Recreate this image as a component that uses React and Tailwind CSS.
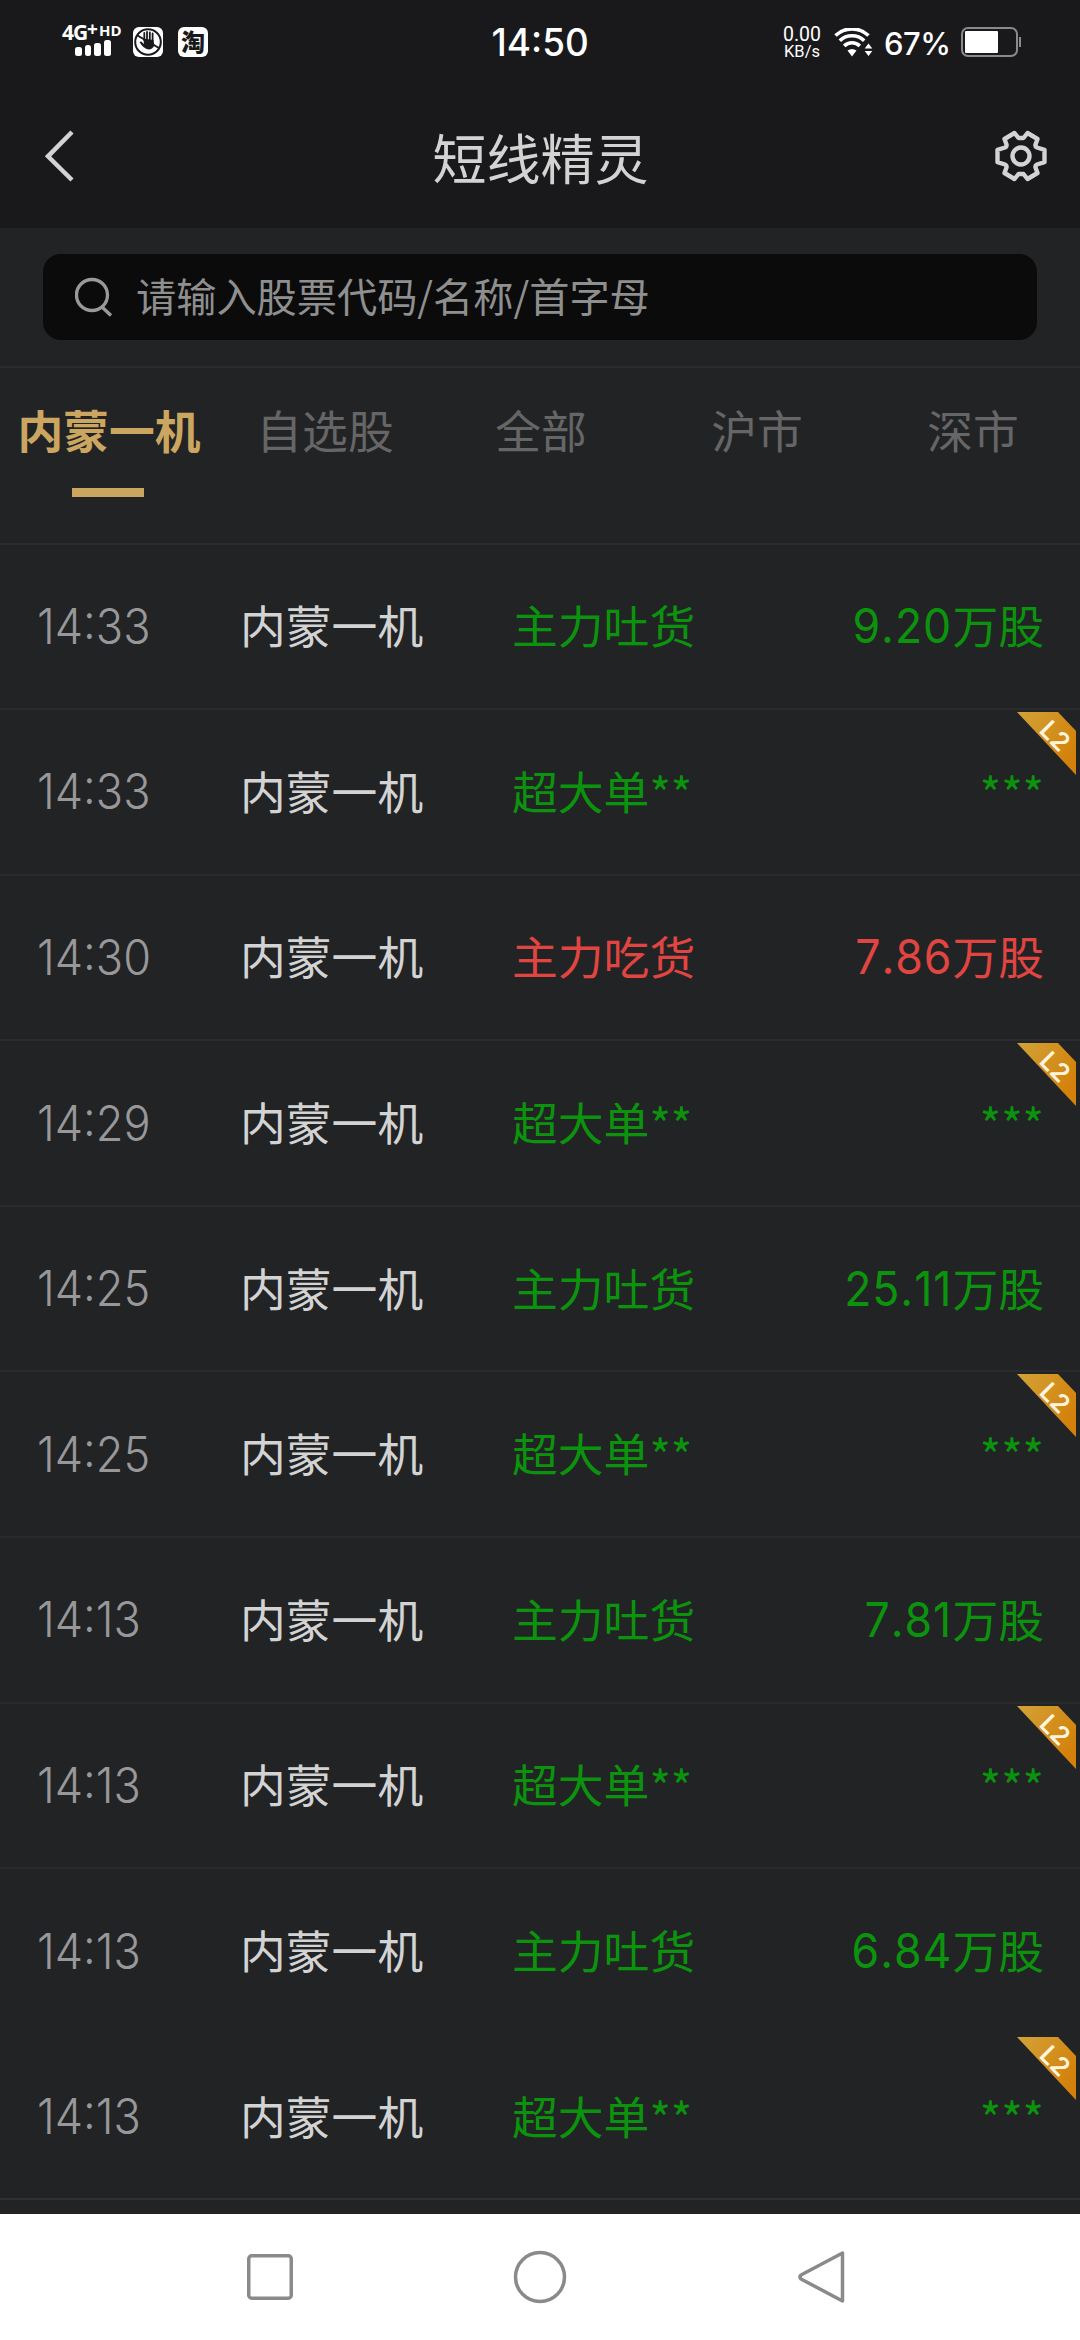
const NOTO = "font-['Noto_Sans_CJK_SC',sans-serif]";

const rows = [
  { time: "14:33", kind: "主力吐货", value: "9.20", color: "text-[#0c930d]" },
  { time: "14:33", kind: "超大单", color: "text-[#0c930d]", l2: true },
  { time: "14:30", kind: "主力吃货", value: "7.86", color: "text-[#e04541]" },
  { time: "14:29", kind: "超大单", color: "text-[#0c930d]", l2: true },
  { time: "14:25", kind: "主力吐货", value: "25.11", color: "text-[#0c930d]" },
  { time: "14:25", kind: "超大单", color: "text-[#0c930d]", l2: true },
  { time: "14:13", kind: "主力吐货", value: "7.81", color: "text-[#0c930d]" },
  { time: "14:13", kind: "超大单", color: "text-[#0c930d]", l2: true },
  { time: "14:13", kind: "主力吐货", value: "6.84", color: "text-[#0c930d]" },
  { time: "14:13", kind: "超大单", color: "text-[#0c930d]", l2: true, topless: true },
];

const tabs = ["内蒙一机", "自选股", "全部", "沪市", "深市"];

function StatusBar() {
  return (
    <div className="flex h-[88px] items-start pt-[25px] text-white">
      <div className="ml-[62px] flex h-8 w-[61px] flex-col">
        <div className="flex h-[15px] items-start font-['Open_Sans',sans-serif] font-bold">
          <span className="w-[25px] text-[21px] leading-[15px] tracking-[-1px]">4G</span>
          <span className="w-[12px] text-[19px] leading-[9px]">+</span>
          <span className="text-[15px] leading-[10px]">HD</span>
        </div>
        <div className="ml-[13px] flex h-4 items-end gap-[3.200px]">
          <i className="h-[9px] w-[6.5px] rounded-[2.500px] bg-white" />
          <i className="h-[11px] w-[6.5px] rounded-[2.500px] bg-white" />
          <i className="h-[13px] w-[6.5px] rounded-[2.500px] bg-white" />
          <i className="h-4 w-[6.5px] rounded-[2.500px] bg-white" />
        </div>
      </div>
      <svg className="mt-0.5 ml-[10px] size-[30px]" viewBox="0 0 30 30">
        <rect width="30" height="30" rx="6" fill="#fff" />
        <circle cx="15" cy="15" r="12.800" fill="none" stroke="#19191b" strokeWidth="2" />
        <path d="M4.500 8.500l21.500 12.500" stroke="#19191b" strokeWidth="2" />
        <path d="M11.300 13V6M14 13V5M16.800 13V5.300M19.600 14V6.500" stroke="#19191b" strokeWidth="1.800" strokeLinecap="round" />
        <path d="M10.300 11.500L20.500 13L21.300 18.500Q19.500 22.500 15.500 22.500Q10.500 22 6.500 15L8.200 14.500L11 17Z" fill="#19191b" />
      </svg>
      <div className={`${NOTO} mt-0.5 ml-[15px] flex size-[30px] items-center justify-center rounded-[6px] bg-white text-[24px] leading-none font-black text-[#19191b]`}>
        <span className="-translate-y-px">淘</span>
      </div>
      <div className="ml-[281px] flex w-[102px] justify-center font-[Inter,sans-serif] text-[38px] leading-[36px] font-medium">
        <span className="-translate-y-px scale-x-[0.970]">14:50</span>
      </div>
      <div className="ml-[191px] flex w-[40px] flex-col items-center font-[Roboto,sans-serif]">
        <span className="text-[19.500px] leading-[19px]">0.00</span>
        <span className="text-[16.500px] leading-[16px]">KB/s</span>
      </div>
      <svg className="mt-[3px] ml-[12px] h-[30px] w-[40px]" viewBox="0 0 40 30">
        <g fill="none" stroke="#fff" strokeWidth="3.600">
          <path d="M1.500 7.500a24 24 0 0 1 33 0" />
          <path d="M5.800 12.700a17.500 17.500 0 0 1 24.400 0" />
          <path d="M10.200 18a11 11 0 0 1 15.600 0" />
        </g>
        <path d="M13.500 22.500q4.500-3.200 9 0L18 28.500z" fill="#fff" />
        <path d="M34.500 15.500l3.800 5h-7.600zM34.500 28l3.800-5h-7.600z" fill="#fff" />
      </svg>
      <div className="ml-[10px] w-[66px] font-[Inter,sans-serif] text-[31px] leading-[37px] font-medium tracking-[-0.500px]">67%</div>
      <div className="mt-0.5 ml-[11px] h-[30px] w-[57px] rounded-[7px] border-2 border-[#8a8a8a] p-0.5">
        <div className="h-[22px] w-[33px] rounded-[1px] bg-white" />
      </div>
      <div className="mt-3 ml-px h-[10px] w-0.5 bg-[#8a8a8a]" />
    </div>
  );
}

function Header() {
  return (
    <div className="flex h-[140px] items-start justify-between pr-[34px] pl-[44px]">
      <svg className="mt-[42px] h-[52px] w-[60px]" viewBox="0 0 60 52" fill="none" stroke="#d3d3d3" strokeWidth="4.500">
        <path d="M28 2L4 26.300L28 50" />
      </svg>
      <h1 className={`${NOTO} mt-[39px] -ml-[18px] text-[54px] leading-[60px] text-[#d3d3d3]`}>短线精灵</h1>
      <svg className="mt-[42px] -mr-px size-[52px]" viewBox="0 0 52 52" fill="none" stroke="#d3d3d3" strokeWidth="4.400" strokeLinejoin="round">
        <path d="M2.500 19.800L10 17.500Q12 16.500 11.500 14.500L9.500 9L19.500 3L23.500 8H28.500L32.500 3L42.500 9L40.500 14.500Q40 16.500 42 17.500L49.500 19.800V32.200L42 34.500Q40 35.500 40.500 37.500L42.500 43L32.500 49L28.500 44H23.500L19.500 49L9.500 43L11.500 37.500Q12 35.500 10 34.500L2.500 32.200Z" />
        <circle cx="26" cy="26" r="8.500" />
      </svg>
    </div>
  );
}

function Tabs() {
  return (
    <div className="grid h-[176.500px] grid-cols-5 border-t-2 border-[#2b2c2e]">
      {tabs.map((t, i) => (
        <div key={t} className="flex flex-col items-center pt-[31px]">
          <span className={`${NOTO} ml-0.5 text-[45.800px] leading-[60px] whitespace-nowrap ${i === 0 ? "font-bold text-[#cba661]" : "text-[#666667]"}`}>{t}</span>
          {i === 0 && <i className="mt-[29px] h-[9px] w-[72px] bg-[#cba661]" />}
        </div>
      ))}
    </div>
  );
}

function Badge() {
  return (
    <svg className="absolute top-[1px] right-[4px] h-[64px] w-[60px]" viewBox="0 0 60 64">
      <defs>
        <linearGradient id="gold" x1="0" y1="0" x2="1" y2="0.600">
          <stop offset="0" stopColor="#d2a338" />
          <stop offset="1" stopColor="#d3810a" />
        </linearGradient>
      </defs>
      <path d="M1 1H42L60 20V64Z" fill="url(#gold)" />
      <text x="0" y="0" transform="translate(22 20.500) rotate(45)" fill="#fff5df" fontFamily="Inter" fontWeight="600" fontSize="25.500">L2</text>
    </svg>
  );
}

function Row({ row }) {
  return (
    <div className={`${NOTO} relative flex h-[165.600px] items-center border-t-2 pr-[36px] pl-[37px] text-[45.800px] leading-[60px] whitespace-nowrap ${row.topless ? "border-transparent" : "border-[#2a2b2d]"}`}>
      <div className="w-[203px]">
        <span className="inline-block origin-left -translate-y-px scale-x-[0.920] font-[Inter,sans-serif] text-[49px] font-[350] text-[#98989a]">{row.time}</span>
      </div>
      <span className="w-[272px] -translate-y-[2px] text-[#d3d3d3]">内蒙一机</span>
      <span className={`-translate-y-[2px] ${row.color}`}>{row.kind}</span>
      {row.l2 && <span className={row.color}>**</span>}
      {row.l2 ? (
        <span className={`ml-auto ${row.color}`}>***</span>
      ) : (
        <div className={`ml-auto flex items-center ${row.color}`}>
          <span className="origin-right scale-x-[0.930] font-[Inter,sans-serif] text-[48px] font-normal tracking-[1px] [font-kerning:none]">{row.value}</span>
          <span className="-translate-y-[2px]">万股</span>
        </div>
      )}
      {row.l2 && <Badge />}
    </div>
  );
}

export default function App() {
  return (
    <div className="flex h-[2340px] w-[1080px] flex-col overflow-hidden bg-[#222325]">
      <div className="h-[228px] shrink-0 bg-[#19191b]">
        <StatusBar />
        <Header />
      </div>
      <div className="h-[138px] shrink-0 px-[43px] pt-[26px]">
        <div className="flex h-[86px] items-center rounded-[18px] bg-[#0b0b0b] pl-[32px]">
          <svg className="size-[40px]" viewBox="0 0 40 40" fill="none" stroke="#99999a" strokeWidth="3.300">
            <circle cx="17" cy="18" r="15.500" />
            <path d="M27 30L36 38.500" />
          </svg>
          <span className={`${NOTO} ml-[21px] -translate-y-0.5 text-[40.200px] leading-[60px] text-[#8f8f90]`}>请输入股票代码/名称/首字母</span>
        </div>
      </div>
      <div className="shrink-0"><Tabs /></div>
      <div className="h-[1671.500px] shrink-0">
        {rows.map((r, i) => (
          <Row key={i} row={r} />
        ))}
        <div className="h-[2px] bg-[#2f3032]" />
      </div>
      <div className="grid h-[126px] shrink-0 grid-cols-3 items-center bg-white px-[135px]">
        <svg className="mx-auto size-[54px]" viewBox="0 0 54 54" fill="none" stroke="#8a8a8a" strokeWidth="3.500">
          <rect x="5.750" y="5.750" width="42.500" height="42.500" rx="3" />
        </svg>
        <svg className="mx-auto size-[54px]" viewBox="0 0 54 54" fill="none" stroke="#8a8a8a" strokeWidth="3.500">
          <circle cx="27" cy="27" r="24.500" />
        </svg>
        <svg className="mx-auto size-[54px] translate-x-[13px]" viewBox="0 0 54 54" fill="none" stroke="#8a8a8a" strokeWidth="3.500" strokeLinejoin="round">
          <path d="M46.500 3V51L5 29Q3 27 5 25Z" />
        </svg>
      </div>
    </div>
  );
}
